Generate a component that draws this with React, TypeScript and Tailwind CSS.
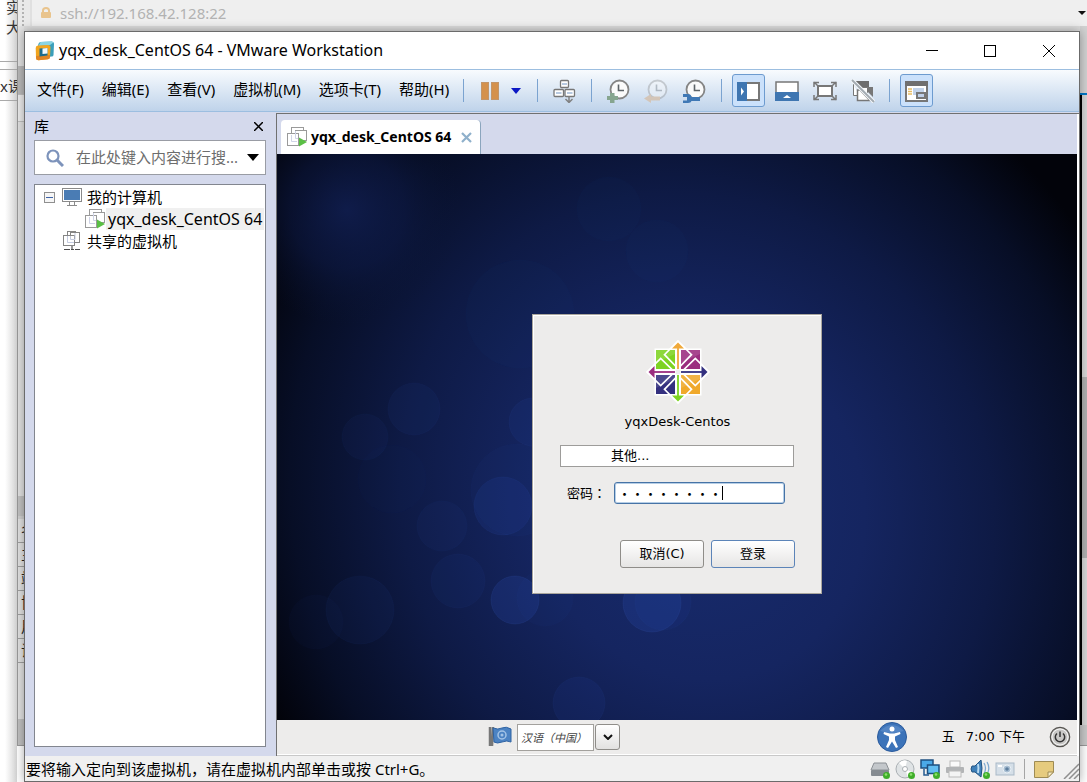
import type { ReactNode } from "react";

const ui = "font-['Noto_Sans','Noto_Sans_CJK_SC',sans-serif]";
const guestFont = "font-['DejaVu_Sans','Noto_Sans_CJK_SC',sans-serif]";

const properties = ["名称", "主机", "端口", "协议", "用户名", "说明"];
const menus = ["文件(F)", "编辑(E)", "查看(V)", "虚拟机(M)", "选项卡(T)", "帮助(H)"];

/* ---------- icons ---------- */

function VmwareLogo() {
  return (
    <svg viewBox="0 0 20 20" className="h-5 w-5 shrink-0" aria-hidden="true">
      <path d="M5.500 1 L16.500 .5 Q19 .5 19 3 L18.500 14 Q18.500 15.500 16.500 15.500 L13 16 V5 L3 6 Q3 1.500 5.500 1Z" fill="#3a9fba" />
      <path d="M5.500 1 L16.500 .5 L18.500 1.500 L15 4 L3.500 5Z" fill="#8ad4e2" />
      <path d="M3 4.500 L13 4 Q15.500 4 15.500 6.500 L15 16 Q15 18 13 18.300 L3.500 19.300 Q1 19.300 1 17 L.7 7 Q.7 4.700 3 4.500Z" fill="#f2a51e" />
      <path d="M1 15 L15 14 V16 Q15 18 13 18.300 L3.500 19.300 Q1 19.300 1 17Z" fill="#e08524" />
      <path d="M4.500 7.500 L12.500 7 V14.500 L4.500 15.500Z" fill="#1c6c8c" />
      <path d="M7.500 7.500 L12.500 7 V12.500 L7.500 13Z" fill="#f1f9fb" />
    </svg>
  );
}

function CloneIcon() {
  return (
    <svg viewBox="0 0 20 20" className="h-5 w-5 shrink-0" aria-hidden="true">
      <g fill="#fff" stroke="#9a9a9a">
        <rect x="4.500" y=".5" width="12" height="11" />
        <rect x="8.500" y="3.500" width="11" height="10" />
        <rect x=".5" y="6.500" width="11" height="12" />
      </g>
      <path d="M4.500 8 V14.500 H10 M8.500 4 V11.500 H11" fill="none" stroke="#cfd3e6" />
      <path d="M12 10.500 L20 15 L12 19.500Z" fill="#5abf45" />
    </svg>
  );
}

function SharedIcon() {
  return (
    <svg viewBox="0 0 20 20" className="h-5 w-5 shrink-0" aria-hidden="true">
      <g fill="#fff" stroke="#858585">
        <rect x="5.500" y=".5" width="8" height="8" />
        <rect x="8.500" y="1.500" width="9" height="10" />
        <rect x="1.500" y="4.500" width="11" height="10" />
      </g>
      <path d="M5.500 5 V11.500 H12 M8.500 5 V8.500 H13 V2" fill="none" stroke="#c3cadf" />
      <path d="M10 15 V18" stroke="#999" strokeWidth="2" />
      <path d="M2 18.500 H8 M9 18.500 H12 M13 18.500 H18" stroke="#4b4b4b" />
    </svg>
  );
}

function MonitorIcon() {
  return (
    <svg viewBox="0 0 20 20" className="h-5 w-5 shrink-0" aria-hidden="true">
      <rect x=".5" y="1.500" width="19" height="13" fill="#fff" stroke="#8a8a8a" />
      <rect x="2" y="3" width="16" height="10" fill="#4a7cb4" />
      <path d="M7.500 15 V18 M12.500 15 V18 M5 18.500 H15" stroke="#8a8a8a" fill="none" />
    </svg>
  );
}

function DevicesIcon() {
  return (
    <svg viewBox="0 0 24 24" className="h-6 w-6" aria-hidden="true">
      <g fill="#fff" stroke="#777" strokeWidth="1.300">
        <rect x="8.500" y="1.500" width="8" height="7" rx="1" />
        <rect x="2" y="10.500" width="9.500" height="7" rx="1" />
        <rect x="13" y="10.500" width="9.500" height="7" rx="1" />
      </g>
      <path d="M10 5 H15 M4 14 H9.500 M15 14 H20.500" stroke="#b7c9e0" strokeWidth="2" />
      <path d="M17 17 V23 M13.500 20 L17 23.500 L20.500 20" stroke="#808080" strokeWidth="1.500" fill="none" />
    </svg>
  );
}

function ClockIcon({ kind }: { kind: "add" | "back" | "manage" }) {
  return (
    <svg viewBox="0 0 24 24" className="h-6 w-6" aria-hidden="true">
      <g opacity={kind === "back" ? 0.35 : 1}>
        <circle cx="13.500" cy="10.500" r="9" fill="#fafafa" stroke="#858585" strokeWidth="1.800" />
        <path d="M12.500 5.500 V11.500 H18" fill="none" stroke="#5d6368" strokeWidth="1.600" />
      </g>
      {kind === "add" && <path d="M4 14 H8.500 V17 H12 V21 H8.500 V24 H4 V21 H1 V17 H4Z" fill="#86a58f" />}
      {kind === "back" && <path d="M0 19.500 L7 15 V17.500 H16 V21.500 H7 V24Z" fill="#d3c5b8" />}
      {kind === "manage" && (
        <path d="M1 15 H6 Q9 15 9.500 18 H18 V22 H9.500 Q9 24 6 24 H1 V21.500 H5 V18 H1Z" fill="#3f78b5" />
      )}
    </svg>
  );
}

function SidePanelIcon() {
  return (
    <svg viewBox="0 0 23 24" className="h-6 w-[23px]" aria-hidden="true">
      <rect x="1" y="4" width="21" height="17" fill="#fff" stroke="#777" strokeWidth="2" />
      <rect x="0" y="3" width="10" height="19" fill="#3f76b1" />
      <path d="M4 8.500 L7 12.500 L4 16.500Z" fill="#fff" />
    </svg>
  );
}

function BottomPanelIcon() {
  return (
    <svg viewBox="0 0 24 24" className="h-6 w-6" aria-hidden="true">
      <rect x="1" y="3" width="22" height="18" fill="#fff" stroke="#777" strokeWidth="1.500" />
      <rect x="0" y="13" width="24" height="9" fill="#3f76b1" />
      <path d="M8 19 L12 16 L16 19Z" fill="#fff" />
    </svg>
  );
}

function FitIcon() {
  return (
    <svg viewBox="0 0 24 24" className="h-6 w-6" aria-hidden="true">
      <rect x="5" y="7" width="14" height="10" fill="#fff" stroke="#777" strokeWidth="2" />
      <path
        d="M1 8 V3.500 H6 M18 3.500 H23 V8 M23 16 V20.500 H18 M6 20.500 H1 V16 M1 3 L5 7 M23 3 L19 7 M23 21 L19 17 M1 21 L5 17"
        fill="none"
        stroke="#777"
        strokeWidth="1.500"
      />
    </svg>
  );
}

function UnityIcon() {
  return (
    <svg viewBox="0 0 24 24" className="h-6 w-6" aria-hidden="true">
      <path d="M4 2 H18 V9 H10Z" fill="#6e6e6e" />
      <path d="M16 8 H22 V18 L16 12Z" fill="#777" />
      <path d="M2.500 5 V16.500 H8 M7 8.500 H16.500 V14" fill="#fff" stroke="#777" />
      <path d="M6.500 15.500 V21.500 H19 L9 11 H6.500Z" fill="#fff" stroke="#777" strokeWidth="1.500" />
      <path d="M1 1 L23 23" stroke="#f6f9fc" strokeWidth="4" />
      <path d="M1 1 L23 23" stroke="#a3abb1" strokeWidth="2" />
    </svg>
  );
}

function ThumbnailIcon() {
  return (
    <svg viewBox="0 0 23 24" className="h-6 w-[23px]" aria-hidden="true">
      <rect x="1" y="3" width="21" height="19" fill="#fff" stroke="#777" strokeWidth="2" />
      <rect x="0" y="2" width="23" height="5" fill="#6f6f6f" />
      <path d="M3 10 H7 M3 12.500 H7 M3 15 H7" stroke="#e8bd65" strokeWidth="1.500" />
      <rect x="8" y="9" width="11" height="7" fill="#c2d3ea" />
      <rect x="12" y="14" width="8" height="5" fill="#bfcfe8" stroke="#777" strokeWidth="2" />
    </svg>
  );
}

const CENTOS_QUADRANTS = [
  { x: -22, y: -22, color: "#7ed321" },
  { x: 3, y: -22, color: "#9b2d7f" },
  { x: -22, y: 3, color: "#34307f" },
  { x: 3, y: 3, color: "#f0a92b" },
];
const CENTOS_ARROWS = [
  { angle: 0, color: "#f0a93a" },
  { angle: 90, color: "#34307f" },
  { angle: 180, color: "#7ed321" },
  { angle: 270, color: "#9b2d7f" },
];

function CentosLogo() {
  return (
    <svg viewBox="-32 -32 64 64" className="h-16 w-16" role="img" aria-label="CentOS">
      <g fill="#fff">
        <rect x="-23.500" y="-23.500" width="47" height="47" />
        <path d="M0 -31.500 L31.500 0 L0 31.500 L-31.500 0Z" />
      </g>
      {CENTOS_QUADRANTS.map((q) => (
        <g key={q.color}>
          <rect x={q.x} y={q.y} width="19" height="19" fill={q.color} />
          <path d={`M${q.x} ${q.y} h19 v4 L${q.x} ${q.y + 13}Z`} fill="#fff" opacity=".12" />
        </g>
      ))}
      {CENTOS_ARROWS.map((a) => (
        <g key={a.angle} transform={`rotate(${a.angle})`}>
          <path d="M0 -31 L13.500 -17.300 L0 -3.500 L-13.500 -17.300Z" fill="none" stroke="#fff" strokeWidth="1.700" />
          <path d="M0 -2 V-24" stroke="#fff" strokeWidth="5" />
          <path d="M0 -29.500 L6 -23.500 H-6Z" fill={a.color} />
          <path d="M0 -3 V-25" stroke={a.color} strokeWidth="1.800" />
        </g>
      ))}
      <circle r="2.500" fill="#ededed" />
    </svg>
  );
}

const BOKEH = [
  [137, 255, 26, 0.07],
  [88, 283, 23, 0.06],
  [256, 268, 24, 0.1],
  [226, 352, 29, 0.14],
  [240, 336, 46, 0.05],
  [165, 372, 25, 0.06],
  [181, 427, 27, 0.07],
  [238, 446, 24, 0.2],
  [83, 456, 34, 0.07],
  [39, 468, 27, 0.04],
  [268, 444, 28, 0.05],
  [302, 549, 26, 0.1],
  [375, 449, 29, 0.2],
  [386, 448, 28, 0.08],
  [332, 55, 32, 0.03],
  [380, 97, 31, 0.03],
  [243, 160, 54, 0.03],
  [115, 325, 34, 0.02],
];

function Wallpaper() {
  return (
    <svg
      viewBox="0 0 800 566"
      preserveAspectRatio="none"
      className="absolute inset-0 h-full w-full"
      aria-hidden="true"
    >
      <defs>
        <radialGradient id="glow" gradientUnits="userSpaceOnUse" cx="0" cy="0" r="1" gradientTransform="translate(420 350) rotate(-28) scale(470 510)">
          <stop offset="0" stopColor="#182c6f" />
          <stop offset=".35" stopColor="#152560" />
          <stop offset=".62" stopColor="#0e1a45" />
          <stop offset=".85" stopColor="#070e26" />
          <stop offset="1" stopColor="#02030a" />
        </radialGradient>
        <radialGradient id="spot">
          <stop offset="0" stopColor="#111f52" stopOpacity=".85" />
          <stop offset=".5" stopColor="#0e1b49" stopOpacity=".55" />
          <stop offset="1" stopColor="#0a1433" stopOpacity="0" />
        </radialGradient>
      </defs>
      <rect width="800" height="566" fill="url(#glow)" />
      <circle cx="70" cy="56" r="115" fill="url(#spot)" />
      {BOKEH.map(([x, y, r, o]) => (
        <circle key={`${x}-${y}`} cx={x} cy={y} r={r} fill="#2c51ba" fillOpacity={o} stroke="#4d74d8" strokeOpacity={o / 2} />
      ))}
    </svg>
  );
}

function StatusIcon({ label, live, children }: { label: string; live?: boolean; children: ReactNode }) {
  return (
    <button type="button" aria-label={label} className="h-5 w-5">
      <svg viewBox="0 0 20 20" className="h-5 w-5" aria-hidden="true">
        {children}
        {live && <circle cx="16.500" cy="16.500" r="3.500" fill="#3fae2a" />}
        {live && <circle cx="16" cy="15.500" r="1.300" fill="#8fe070" />}
      </svg>
    </button>
  );
}

/* ---------- page parts ---------- */

function Backdrop() {
  return (
    <div className="absolute inset-0 flex overflow-hidden bg-white" aria-hidden="true">
      <div className="w-[17px] shrink-0 overflow-hidden whitespace-nowrap bg-linear-to-r from-white from-30% to-[#d4d4d4] text-[15px] leading-[20px] text-[#333]">
        <div className="flex h-[62px] flex-col border-b border-[#a9a9a9] pl-[6px]">
          <div className="-mt-[3px]">实</div>
          <div>大</div>
        </div>
        <div className="mt-[7px] h-8 border-y border-[#a9a9a9] pt-[6px]">x课</div>
      </div>
      <div className="flex h-[746px] min-w-0 grow flex-col border-b border-l border-[#9a9a9a] bg-[#dcdcdc]">
        <div className="flex h-[26px] shrink-0">
          <div className="w-[14px] border-r-2 border-[#e0e0e0] bg-[#e9e9e9] pl-1">
            <div className="h-full w-[2px] border-r-2 border-dotted border-[#b2b2b2]" />
          </div>
          <div className="flex grow items-center gap-2 bg-[#efefef] pl-2 pr-px">
            <svg viewBox="0 0 12 12" className="h-3 w-3">
              <path d="M3 6 V3.500 Q3 1 6 1 Q9 1 9 3.500 V6" fill="none" stroke="#e9c48d" strokeWidth="2" />
              <rect x="1" y="5" width="10" height="6" rx="1" fill="#e9c48d" />
            </svg>
            <span className="grow text-[15px] leading-5 text-[#b2b2b2]">ssh://192.168.42.128:22</span>
            <svg viewBox="0 0 8 4" className="h-1 w-2">
              <path d="M0 0 H8 L4 4Z" fill="#111" />
            </svg>
          </div>
        </div>
        <div className="flex grow justify-between">
          <div className="flex w-[6px] flex-col bg-[#e2e2e2] text-[15px] leading-[23px] text-[#222]">
            <div className="mt-10 h-7 bg-[#b9b9b9]" />
            <div className="h-7 border-y border-[#c0c0c0] bg-[#ececec]" />
            <div className="grow" />
            <div className="h-5 bg-[#c2c2c2]" />
            <div className="h-[3px] bg-[#d0d0d0]" />
            {properties.map((p) => (
              <div key={p} className="h-6 overflow-hidden whitespace-nowrap border-b border-[#a0a0a0] pl-[3px]">
                {p}
              </div>
            ))}
            <div className="h-14" />
            <div className="h-[26px] bg-[#c0c0c0]" />
          </div>
          <div className="flex w-[7px] flex-col">
            <div className="h-[67px] bg-[#d2d2d2]" />
            <div className="h-[2px] bg-[#0078c8]" />
            <div className="flex grow flex-col border-l-2 border-black bg-[#d6d6d6]">
              <div className="h-[282px]" />
              <div className="h-[181px] bg-[#b0b0b0]" />
            </div>
            <div className="h-5 bg-[#c9c9c9]" />
          </div>
        </div>
      </div>
    </div>
  );
}

function TitleBar() {
  return (
    <header className="flex h-[37px] items-center bg-white pl-[10px]">
      <VmwareLogo />
      <h1 className="grow pb-px pl-1 text-[16px] leading-5 text-black">yqx_desk_CentOS 64 - VMware Workstation</h1>
      <button type="button" aria-label="最小化" className="grid h-full w-[58px] place-items-center">
        <svg viewBox="0 0 12 12" className="h-3 w-3"><path d="M0 5.500 H12" stroke="#000" /></svg>
      </button>
      <button type="button" aria-label="最大化" className="grid h-full w-[58px] place-items-center">
        <svg viewBox="0 0 12 12" className="h-3 w-3"><rect x=".5" y=".5" width="11" height="11" fill="none" stroke="#000" /></svg>
      </button>
      <button type="button" aria-label="关闭" className="grid h-full w-[60px] place-items-center">
        <svg viewBox="0 0 12 12" className="h-3 w-3"><path d="M0 0 L12 12 M12 0 L0 12" stroke="#000" /></svg>
      </button>
    </header>
  );
}

function Separator() {
  return <span className="h-[23px] w-px shrink-0 bg-[#7ba3d0]" />;
}

function Tool({ label, active, children }: { label: string; active?: boolean; children: ReactNode }) {
  return (
    <button
      type="button"
      aria-label={label}
      aria-pressed={active}
      className={
        active
          ? "grid h-[33px] w-[33px] shrink-0 place-items-center rounded-[3px] border border-[#6d9bcf] bg-[#cbe1fb]"
          : "grid h-[33px] w-[24px] shrink-0 place-items-center"
      }
    >
      {children}
    </button>
  );
}

function MenuBar() {
  return (
    <div className="flex h-[43px] items-center overflow-hidden border-y border-[#9cbee0] bg-linear-to-b from-[#f8fbfe] to-[#bfd3ea]">
      <nav className="flex w-[438px] shrink-0 gap-[18px] pb-[3px] pl-3">
        {menus.map((m) => (
          <button key={m} type="button" className="shrink-0 whitespace-nowrap text-[15px] leading-5 text-black">
            {m}
          </button>
        ))}
      </nav>
      <div className="flex items-center">
        <Separator />
        <button type="button" aria-label="挂起" className="ml-[17px] flex h-[18px] gap-[2px]">
          <span className="h-[18px] w-2 border border-[#c2956a] bg-[#d4914d]" />
          <span className="h-[18px] w-2 border border-[#c2956a] bg-[#d4914d]" />
        </button>
        <button type="button" aria-label="电源选项" className="ml-3 mr-4">
          <svg viewBox="0 0 10 6" className="h-[6px] w-[10px]"><path d="M0 0 H10 L5 6Z" fill="#0b17c4" /></svg>
        </button>
        <Separator />
        <div className="flex pl-[14px] pr-[15px]"><Tool label="发送 Ctrl+Alt+Del"><DevicesIcon /></Tool></div>
        <Separator />
        <div className="flex gap-[14px] pl-[14px] pr-[15px]">
          <Tool label="拍摄快照"><ClockIcon kind="add" /></Tool>
          <Tool label="恢复快照"><ClockIcon kind="back" /></Tool>
          <Tool label="管理快照"><ClockIcon kind="manage" /></Tool>
        </div>
        <Separator />
        <div className="flex gap-[10px] pl-[10px] pr-[14px]">
          <Tool label="显示库" active><SidePanelIcon /></Tool>
          <div className="flex gap-[14px]">
            <Tool label="缩略图栏"><BottomPanelIcon /></Tool>
            <Tool label="全屏"><FitIcon /></Tool>
            <Tool label="Unity 模式"><UnityIcon /></Tool>
          </div>
        </div>
        <Separator />
        <div className="flex pl-[10px]"><Tool label="控制台视图" active><ThumbnailIcon /></Tool></div>
      </div>
    </div>
  );
}

function Library() {
  return (
    <aside className="flex w-[251px] shrink-0 flex-col pb-[9px] pl-[9px] pr-[10px] text-[15px] leading-[22px] text-black">
      <div className="flex h-7 items-center justify-between pr-[3px]">
        <h2>库</h2>
        <button type="button" aria-label="关闭库">
          <svg viewBox="0 0 9 9" className="h-[9px] w-[9px]"><path d="M0 0 L9 9 M9 0 L0 9" stroke="#000" strokeWidth="1.500" /></svg>
        </button>
      </div>
      <div className="flex h-[35px] items-center border border-[#999ca4] bg-white px-[6px]">
        <svg viewBox="0 0 18 18" className="ml-[5px] h-[18px] w-[18px] shrink-0" aria-hidden="true">
          <circle cx="7" cy="7" r="5.500" fill="none" stroke="#7d93bb" strokeWidth="2.200" />
          <path d="M11 11 L17 17" stroke="#7d93bb" strokeWidth="3" />
        </svg>
        <input
          aria-label="搜索"
          placeholder="在此处键入内容进行搜..."
          className="ml-3 min-w-0 grow bg-transparent pb-px leading-5 outline-none placeholder:text-[#6d6d6d]"
        />
        <button type="button" aria-label="搜索选项" className="shrink-0">
          <svg viewBox="0 0 12 7" className="h-[7px] w-3"><path d="M0 0 H12 L6 7Z" fill="#000" /></svg>
        </button>
      </div>
      <ul className="mt-[9px] grow border border-[#82868f] bg-white pt-px">
        <li>
          <div className="flex h-[22px] items-center pl-[9px]">
            <button type="button" aria-label="折叠" className="mr-[7px] grid h-[11px] w-[11px] place-items-center border border-[#8f8f8f] bg-[#f6f6f6]">
              <span className="h-px w-[7px] bg-[#3d62a8]" />
            </button>
            <MonitorIcon />
            <span className="pl-[5px]">我的计算机</span>
          </div>
          <ul>
            <li className="flex h-[22px] items-center whitespace-nowrap pl-[50px]">
              <CloneIcon />
              <span className="ml-px bg-[#f0f0f0] px-[2px] text-[16px]">yqx_desk_CentOS 64</span>
            </li>
          </ul>
        </li>
        <li className="flex h-[22px] items-center pl-[27px]">
          <SharedIcon />
          <span className="pl-[5px]">共享的虚拟机</span>
        </li>
      </ul>
    </aside>
  );
}

function LoginDialog() {
  const button = "h-7 w-[84px] rounded-[3px] border bg-linear-to-b from-white to-[#e6e5e4]";
  return (
    <form
      onSubmit={(e) => e.preventDefault()}
      className="relative flex h-[280px] w-[290px] flex-col border border-[#aaa69d] bg-[#edeceb] pl-[27px] pr-[26px] pt-[25px] text-[13px] leading-4 text-black shadow-[inset_1px_1px_0_#fff]"
    >
      <div className="flex justify-center"><CentosLogo /></div>
      <p className="mt-[10px] text-center">yqxDesk-Centos</p>
      <button type="button" className="mr-px mt-[15px] h-[22px] border border-[#9d9c9a] bg-white pl-[50px] text-left">
        其他...
      </button>
      <div className="mt-[15px] flex h-[22px] items-center pl-[7px]">
        <label htmlFor="password" className="w-[47px] whitespace-nowrap font-['Noto_Sans_CJK_TC',sans-serif]" lang="zh-TW">密码：</label>
        <div className="relative">
          <input
            id="password"
            defaultValue="・・・・・・・・"
            className="block h-[22px] w-[171px] rounded-[3px] border border-[#4673a6] bg-white pl-[3px] font-['Noto_Sans_CJK_SC',sans-serif] text-[13px] leading-4 shadow-[inset_0_0_0_1px_#b6cee6] outline-none"
          />
          <span className="absolute left-[108px] top-1 h-[14px] w-px bg-black" />
        </div>
      </div>
      <div className="mt-9 flex justify-end gap-[7px]">
        <button type="button" className={`${button} border-[#8f8d89]`}>取消(C)</button>
        <button type="submit" className={`${button} border-[#5c84b8]`}>登录</button>
      </div>
    </form>
  );
}

function GuestPanel() {
  return (
    <div className="flex h-[34px] items-center bg-[#edeceb] text-[13px] leading-4 text-black">
      <div className="flex grow items-center pl-[211px]">
        <svg viewBox="0 0 24 22" className="h-[22px] w-6" aria-hidden="true">
          <path d="M2 1 V20 M5 1 L4 20" stroke="#777" strokeWidth="2.500" />
          <path d="M5 2 Q10 4 14 2 T23 3 V16 Q19 14 14 16 T6 16Z" fill="#4c83c3" stroke="#2e62a2" />
          <circle cx="14" cy="9" r="4" fill="none" stroke="#a4c4e6" strokeWidth="1.500" />
          <circle cx="14" cy="9" r="1.500" fill="#a4c4e6" />
        </svg>
        <input
          readOnly
          aria-label="语言"
          value="汉语（中国）"
          className="ml-[5px] h-[27px] w-[77px] border border-[#a3a19d] bg-white pl-[3px] text-[11px] italic text-[#444] outline-none"
        />
        <button
          type="button"
          aria-label="选择语言"
          className="ml-px grid h-[26px] w-[25px] place-items-center rounded-[3px] border border-[#8f8d89] bg-linear-to-b from-white to-[#e2e1e0]"
        >
          <svg viewBox="0 0 10 6" className="h-[6px] w-[10px]"><path d="M1 1 L5 5 L9 1" fill="none" stroke="#111" strokeWidth="2" /></svg>
        </button>
      </div>
      <button type="button" aria-label="辅助功能" className="mr-[34px]">
        <svg viewBox="0 0 32 32" className="h-8 w-8" aria-hidden="true">
          <circle cx="16" cy="16" r="14.500" fill="#3c73b9" stroke="#2a5a9c" />
          <path d="M4 10 Q16 -2 28 10 Q16 14 4 10Z" fill="#6a98d2" opacity=".5" />
          <circle cx="16" cy="8" r="2.500" fill="#fff" />
          <path d="M8 11 L14 12.500 H18 L24 11 L24.500 13 L19 15.500 V19 L22 26 L20 27 L16 20.500 L12 27 L10 26 L13 19 V15.500 L7.500 13Z" fill="#fff" />
        </svg>
      </button>
      <span>五</span>
      <time className="ml-[11px] whitespace-nowrap">7:00 下午</time>
      <button type="button" aria-label="关机" className="ml-6 mr-[6px]">
        <svg viewBox="0 0 22 22" className="h-[22px] w-[22px]" aria-hidden="true">
          <circle cx="11" cy="11" r="9.700" fill="#c9c8c6" stroke="#55534f" strokeWidth="1.200" />
          <circle cx="11" cy="11" r="8" fill="none" stroke="#f5f5f5" />
          <path d="M8 7.500 A4.700 4.700 0 1 0 14 7.500 M11 5.500 V11" fill="none" stroke="#333" strokeWidth="1.500" />
        </svg>
      </button>
    </div>
  );
}

function Console() {
  return (
    <div className="mt-px flex min-w-0 grow border-l border-t border-[#707070] bg-white pr-[2px]">
      <main className="flex min-w-0 grow flex-col bg-[#d4d9ec]">
        <div className="flex h-10 items-end pl-1">
          <div className="flex h-[34px] w-[200px] items-center rounded-t-[4px] border-r border-[#8ba5bd] bg-white pl-[6px] pr-2">
            <CloneIcon />
            <span className="grow whitespace-nowrap pl-1 text-[14px] font-bold leading-5 text-black">yqx_desk_CentOS 64</span>
            <button type="button" aria-label="关闭标签页">
              <svg viewBox="0 0 11 11" className="h-[11px] w-[11px]"><path d="M1 1 L10 10 M10 1 L1 10" stroke="#8fb0cb" strokeWidth="2.200" /></svg>
            </button>
          </div>
        </div>
        <section className={`flex grow flex-col ${guestFont}`}>
          <div className="relative grid grow place-items-center pt-[34px]">
            <Wallpaper />
            <LoginDialog />
          </div>
          <GuestPanel />
        </section>
        <div className="h-[2px] border-b border-[#c8c8c8] bg-white" />
      </main>
    </div>
  );
}

function StatusBar() {
  return (
    <footer className="flex h-[25px] items-center justify-between bg-[#f0f0f0] text-[15px] leading-5 text-black">
      <p className="whitespace-nowrap pl-px">要将输入定向到该虚拟机，请在虚拟机内部单击或按 Ctrl+G。</p>
      <div className="flex items-center gap-[5px]">
        <StatusIcon label="硬盘" live>
          <path d="M4 4 H16 L19 11 H1Z" fill="#c3c7cb" stroke="#8b9095" />
          <rect x="1" y="11" width="18" height="6" rx="1" fill="#858b91" />
        </StatusIcon>
        <StatusIcon label="光驱" live>
          <circle cx="10" cy="10" r="9" fill="#dfe3e5" stroke="#a9afb3" />
          <path d="M10 10 L4 4 Q8 0 12 2Z M10 10 L17 13 L13 18Z" fill="#fff" />
          <circle cx="10" cy="10" r="2.500" fill="#fff" stroke="#a9afb3" />
        </StatusIcon>
        <StatusIcon label="网络" live>
          <rect x="1" y="1" width="12" height="8" fill="#4aa9e8" stroke="#1d4f80" strokeWidth="1.500" />
          <path d="M4 10 V16 H9" fill="none" stroke="#245b90" strokeWidth="1.500" />
          <rect x="7.500" y="6" width="11.500" height="8.500" fill="#62bdf2" stroke="#1d4f80" strokeWidth="1.500" />
        </StatusIcon>
        <StatusIcon label="打印机">
          <rect x="5" y="2" width="10" height="6" fill="#fafafa" stroke="#bababa" />
          <rect x="1" y="8" width="18" height="6" rx="1" fill="#b2b4b6" />
          <rect x="4" y="12" width="12" height="6" fill="#f4f4f4" stroke="#bababa" />
        </StatusIcon>
        <StatusIcon label="声音" live>
          <path d="M2 7 H5 L11 1 Q13 9 11 18 L5 13 H2Q0 10 2 7Z" fill="#3e7fb8" stroke="#245482" />
          <path d="M8 5 Q9 9 8 14" stroke="#b8daf2" strokeWidth="2" fill="none" />
          <path d="M14 4 Q17 9 14 15 M17 3 Q20 8 18 13" stroke="#7fa9cf" fill="none" strokeWidth="1.300" />
        </StatusIcon>
        <StatusIcon label="摄像头">
          <rect x="1" y="4" width="18" height="12" fill="#d5dfe8" stroke="#a9b9c7" />
          <rect x="3" y="6" width="4" height="2" fill="#fff" />
          <circle cx="12" cy="10" r="4" fill="#a9bfd3" stroke="#e9f0f5" />
          <circle cx="12" cy="10" r="1.800" fill="#5e7f9e" />
        </StatusIcon>
        <span className="mx-1 h-5 w-px bg-[#a5a5a5]" />
        <StatusIcon label="消息">
          <path d="M.5 2.500 H19.500 V13 L14 18.500 H.5Z" fill="#e6cb7e" stroke="#9e8b54" />
          <path d="M19.500 13 H14 V18.500Z" fill="#f8ecc4" stroke="#9e8b54" />
        </StatusIcon>
        <svg viewBox="0 0 16 16" className="ml-1 h-4 w-4 self-end" aria-hidden="true">
          <path d="M1 16 L16 1 M6 16 L16 6 M11 16 L16 11" stroke="#8f8f8f" strokeWidth="1.500" />
        </svg>
      </div>
    </footer>
  );
}

export default function App() {
  return (
    <div className={`relative flex min-h-screen flex-col overflow-hidden ${ui}`}>
      <Backdrop />
      <div className="relative ml-6 mr-[7px] mt-[31px] flex grow flex-col border border-[#6b6b6b] bg-[#d4d9ec] shadow-[0_0_10px_rgba(0,0,0,0.35)]">
        <TitleBar />
        <MenuBar />
        <div className="flex grow">
          <Library />
          <Console />
        </div>
        <StatusBar />
      </div>
    </div>
  );
}
